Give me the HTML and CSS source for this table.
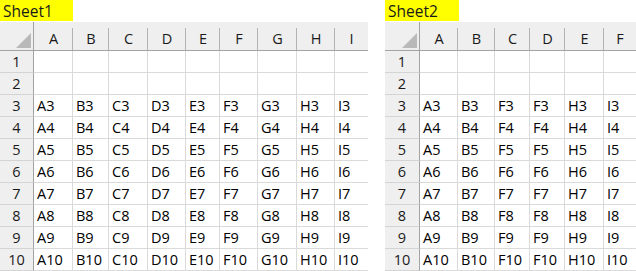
FILE: index.html
```html
<!DOCTYPE html>
<html>
<head>
<meta charset="utf-8">
<link rel="stylesheet" href="styles.css">
</head>
<body>
<div class="page">
  <section class="sheet">
    <div class="tab tab1">Sheet1</div>
    <div class="grid g1">
      <div class="corner"><svg class="tri" width="15" height="15" viewBox="0 0 15 15"><polygon points="15,0 15,15 0,15" fill="#b9b9b9"/></svg></div>
      <div class="ch">A</div><div class="ch">B</div><div class="ch">C</div><div class="ch">D</div><div class="ch">E</div><div class="ch">F</div><div class="ch">G</div><div class="ch">H</div><div class="ch">I</div>
      <div class="rh">1</div><div class="c"></div><div class="c"></div><div class="c"></div><div class="c"></div><div class="c"></div><div class="c"></div><div class="c"></div><div class="c"></div><div class="c"></div>
      <div class="rh">2</div><div class="c"></div><div class="c"></div><div class="c"></div><div class="c"></div><div class="c"></div><div class="c"></div><div class="c"></div><div class="c"></div><div class="c"></div>
      <div class="rh">3</div><div class="c">A3</div><div class="c">B3</div><div class="c">C3</div><div class="c">D3</div><div class="c">E3</div><div class="c">F3</div><div class="c">G3</div><div class="c">H3</div><div class="c">I3</div>
      <div class="rh">4</div><div class="c">A4</div><div class="c">B4</div><div class="c">C4</div><div class="c">D4</div><div class="c">E4</div><div class="c">F4</div><div class="c">G4</div><div class="c">H4</div><div class="c">I4</div>
      <div class="rh">5</div><div class="c">A5</div><div class="c">B5</div><div class="c">C5</div><div class="c">D5</div><div class="c">E5</div><div class="c">F5</div><div class="c">G5</div><div class="c">H5</div><div class="c">I5</div>
      <div class="rh">6</div><div class="c">A6</div><div class="c">B6</div><div class="c">C6</div><div class="c">D6</div><div class="c">E6</div><div class="c">F6</div><div class="c">G6</div><div class="c">H6</div><div class="c">I6</div>
      <div class="rh">7</div><div class="c">A7</div><div class="c">B7</div><div class="c">C7</div><div class="c">D7</div><div class="c">E7</div><div class="c">F7</div><div class="c">G7</div><div class="c">H7</div><div class="c">I7</div>
      <div class="rh">8</div><div class="c">A8</div><div class="c">B8</div><div class="c">C8</div><div class="c">D8</div><div class="c">E8</div><div class="c">F8</div><div class="c">G8</div><div class="c">H8</div><div class="c">I8</div>
      <div class="rh">9</div><div class="c">A9</div><div class="c">B9</div><div class="c">C9</div><div class="c">D9</div><div class="c">E9</div><div class="c">F9</div><div class="c">G9</div><div class="c">H9</div><div class="c">I9</div>
      <div class="rh">10</div><div class="c">A10</div><div class="c">B10</div><div class="c">C10</div><div class="c">D10</div><div class="c">E10</div><div class="c">F10</div><div class="c">G10</div><div class="c">H10</div><div class="c">I10</div>
    </div>
  </section>
  <section class="sheet">
    <div class="tab tab2">Sheet2</div>
    <div class="grid g2">
      <div class="corner"><svg class="tri" width="15" height="15" viewBox="0 0 15 15"><polygon points="15,0 15,15 0,15" fill="#b9b9b9"/></svg></div>
      <div class="ch">A</div><div class="ch">B</div><div class="ch">C</div><div class="ch">D</div><div class="ch">E</div><div class="ch">F</div>
      <div class="rh">1</div><div class="c"></div><div class="c"></div><div class="c"></div><div class="c"></div><div class="c"></div><div class="c"></div>
      <div class="rh">2</div><div class="c"></div><div class="c"></div><div class="c"></div><div class="c"></div><div class="c"></div><div class="c"></div>
      <div class="rh">3</div><div class="c">A3</div><div class="c">B3</div><div class="c">F3</div><div class="c">F3</div><div class="c">H3</div><div class="c">I3</div>
      <div class="rh">4</div><div class="c">A4</div><div class="c">B4</div><div class="c">F4</div><div class="c">F4</div><div class="c">H4</div><div class="c">I4</div>
      <div class="rh">5</div><div class="c">A5</div><div class="c">B5</div><div class="c">F5</div><div class="c">F5</div><div class="c">H5</div><div class="c">I5</div>
      <div class="rh">6</div><div class="c">A6</div><div class="c">B6</div><div class="c">F6</div><div class="c">F6</div><div class="c">H6</div><div class="c">I6</div>
      <div class="rh">7</div><div class="c">A7</div><div class="c">B7</div><div class="c">F7</div><div class="c">F7</div><div class="c">H7</div><div class="c">I7</div>
      <div class="rh">8</div><div class="c">A8</div><div class="c">B8</div><div class="c">F8</div><div class="c">F8</div><div class="c">H8</div><div class="c">I8</div>
      <div class="rh">9</div><div class="c">A9</div><div class="c">B9</div><div class="c">F9</div><div class="c">F9</div><div class="c">H9</div><div class="c">I9</div>
      <div class="rh">10</div><div class="c">A10</div><div class="c">B10</div><div class="c">F10</div><div class="c">F10</div><div class="c">H10</div><div class="c">I10</div>
    </div>
  </section>
</div>
</body>
</html>
```

FILE: styles.css
```css
*, *::before, *::after {
  box-sizing: border-box;
}

html, body {
  margin: 0;
  padding: 0;
  background: #ffffff;
}

body {
  font-family: "Open Sans", "Noto Sans", sans-serif;
  font-size: 14.5px;
  color: #000000;
}

.page {
  display: flex;
  gap: 17px;
  align-items: flex-start;
}

.sheet {
  display: flex;
  flex-direction: column;
}

.tab {
  height: 21px;
  margin-bottom: 1px;
  background: #ffff00;
  padding-left: 3px;
  padding-top: 2px;
  display: flex;
  align-items: center;
  font-size: 15.5px;
  line-height: 1;
  color: #1a1a1a;
}

.tab1 { width: 73px; }
.tab2 { width: 74px; }

.grid {
  display: grid;
  grid-template-rows: 29px repeat(10, 22px);
}

.g1 {
  grid-template-columns: 34px 39px 36px 39px 38px 34px 38px 39px 38px 33px;
}

.g2 {
  grid-template-columns: 35px 38px 37px 35px 35px 39px 32px;
}

.corner {
  background: #efefef;
  border-bottom: 1px solid #a3a3a3;
  border-right: 1px solid #a3a3a3;
  display: flex;
  justify-content: flex-end;
  align-items: flex-end;
  padding: 0 2px 2px 0;
}

.tri {
  display: block;
}

.ch {
  background:
    linear-gradient(#b3b3b3, #b3b3b3) right bottom / 1px 22px no-repeat,
    #efefef;
  border-bottom: 1px solid #a3a3a3;
  display: flex;
  align-items: center;
  justify-content: center;
  padding-top: 4px;
  color: #1a1a1a;
}

.rh {
  background: #efefef;
  border-right: 1px solid #a3a3a3;
  border-bottom: 1px solid #d4d4d4;
  display: flex;
  align-items: center;
  justify-content: center;
  color: #1a1a1a;
}

.c {
  border-right: 1px solid #dadada;
  border-bottom: 1px solid #dadada;
  display: flex;
  align-items: center;
  padding-left: 3px;
  white-space: nowrap;
  overflow: hidden;
}

.g1 > :nth-child(10n),
.g2 > :nth-child(7n) {
  border-right: none;
}

.g1 > .ch:nth-child(10n),
.g2 > .ch:nth-child(7n) {
  background: #efefef;
}
```
